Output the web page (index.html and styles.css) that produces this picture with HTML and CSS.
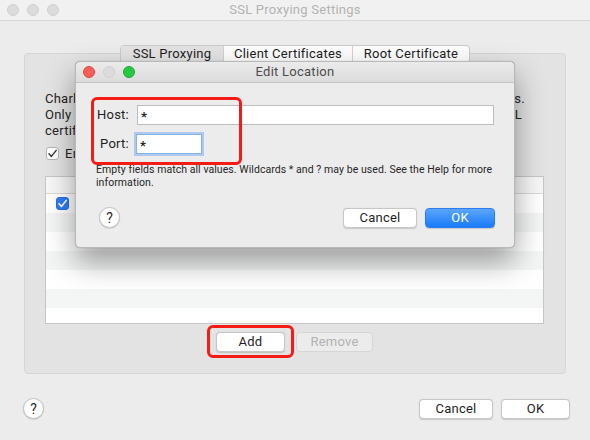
FILE: index.html
```html
<!DOCTYPE html>
<html>
<head>
<meta charset="utf-8">
<link rel="stylesheet" href="styles.css">
</head>
<body>
<div class="window">
  <div class="titlebar">
    <div class="lights">
      <span class="light off"></span><span class="light off"></span><span class="light off"></span>
    </div>
    <div class="title">SSL Proxying Settings</div>
    <div></div>
  </div>
  <div class="content">
    <div class="tabs">
      <div class="tab t1 selected">SSL Proxying</div>
      <div class="tab t2">Client Certificates</div>
      <div class="tab t3">Root Certificate</div>
    </div>
    <div class="tabbox">
      <div class="desc">
        <div class="line l1">Charles can show you the plain text contents of SSL requests and responses.</div>
        <div class="line l2">Only the locations listed below will be proxied. Charles will issue SSL</div>
        <div class="line">certificates signed by its root certificate, please see the Help.</div>
      </div>
      <div class="check-row"><span class="cb"><svg viewBox="0 0 13 13" width="13" height="13"><path d="M3 6.8 L5.4 9.4 L10.2 3.4" fill="none" stroke="#3a3a3a" stroke-width="1.5" stroke-linecap="round" stroke-linejoin="round"/></svg></span><span>Enable SSL Proxying</span></div>
      <div class="table">
        <div class="thead"></div>
        <div class="row"><span class="cb blue"><svg viewBox="0 0 13 13" width="13" height="13"><path d="M3 6.8 L5.4 9.4 L10.2 3.4" fill="none" stroke="#fff" stroke-width="1.6" stroke-linecap="round" stroke-linejoin="round"/></svg></span><span class="loc">*:*</span></div>
        <div class="row alt"></div>
        <div class="row"></div>
        <div class="row alt"></div>
        <div class="row"></div>
        <div class="row alt"></div>
        <div class="row"></div>
      </div>
      <div class="btnrow">
        <span class="hl"><button class="btn add">Add</button></span>
        <button class="btn remove" disabled>Remove</button>
      </div>
    </div>
    <div class="footer">
      <span class="help">?</span>
      <div class="actions">
        <button class="btn cancel">Cancel</button>
        <button class="btn ok-plain">OK</button>
      </div>
    </div>
  </div>

  <div class="dialog">
    <div class="dtitlebar">
      <div class="lights dl">
        <span class="light red"></span><span class="light off"></span><span class="light green"></span>
      </div>
      <div class="dtitle">Edit Location</div>
      <div></div>
    </div>
    <div class="dbody">
      <div class="form">
        <label class="lbl">Host:</label>
        <div class="field host">*</div>
        <label class="lbl">Port:</label>
        <div class="field port">*</div>
      </div>
      <div class="hint">Empty fields match all values. Wildcards * and ? may be used. See the Help for more<br>information.</div>
      <div class="dactions">
        <span class="help">?</span>
        <div class="actions">
          <button class="btn dcancel">Cancel</button>
          <button class="btn primary">OK</button>
        </div>
      </div>
    </div>
    <div class="mark"></div>
  </div>
</div>
</body>
</html>
```
FILE: styles.css
```css
* { box-sizing: border-box; }
html, body { margin: 0; padding: 0; }
body {
  width: 590px;
  height: 440px;
  overflow: hidden;
  background: #ececec;
  font-family: Roboto, "Liberation Sans", sans-serif;
  font-size: 13px;
  letter-spacing: 0.25px;
  color: #242424;
}
.window {
  position: relative;
  width: 590px;
  height: 440px;
  background: #ececec;
}
.titlebar {
  height: 21px;
  display: grid;
  grid-template-columns: 1fr auto 1fr;
  align-items: center;
  background: #f1f1f1;
  border-bottom: 1px solid #d8d8d8;
}
.lights {
  display: flex;
  gap: 8px;
  padding-left: 7px;
}
.light {
  width: 12px;
  height: 12px;
  border-radius: 50%;
  display: block;
}
.light.off { background: #dcdcdc; border: 1px solid #d0d0d0; }
.light.red { background: #fc5f57; border: 1px solid #df4741; }
.light.green { background: #2ac840; border: 1px solid #1ea930; }
.title {
  color: #b3b3b3;
  font-size: 13px;
  line-height: 20px;
}
.content {
  display: flex;
  flex-direction: column;
}
.tabs {
  margin-top: 24px;
  align-self: center;
  display: flex;
  height: 21px;
  margin-bottom: -13px;
  position: relative;
  z-index: 1;
  border: 1px solid #c9c9c9;
  border-radius: 4px;
  background: #fdfdfd;
  overflow: hidden;
}
.tab {
  text-align: center;
  line-height: 16px;
  padding-bottom: 3px;
  border-right: 1px solid #d2d2d2;
  color: #1e1e1e;
}
.tab.t1 { width: 103px; }
.tab.t2 { width: 129px; }
.tab.t3 { width: 116px; border-right: none; }
.tab.selected { background: #e3e3e3; }
.tabbox {
  margin: 0 24px;
  height: 321px;
  background: #e3e3e3;
  border: 1px solid #d6d6d6;
  border-radius: 4px;
  padding: 37px 21px 0 20px;
}
.desc .line {
  line-height: 16px;
  white-space: nowrap;
}
.desc .l1, .desc .l2 {
  white-space: normal;
  text-align: justify;
  text-align-last: justify;
}
.desc .l1 { width: 480px; }
.desc .l2 { width: 477px; }
.check-row {
  margin-top: 6px;
  height: 16px;
  display: flex;
  align-items: center;
  gap: 6px;
  padding-left: 1px;
}
.cb {
  width: 13px;
  height: 13px;
  border-radius: 3px;
  background: #fff;
  border: 1px solid #b5b5b5;
  display: flex;
  align-items: center;
  justify-content: center;
  overflow: hidden;
}
.cb svg { display: block; flex: none; }
.cb.blue { background: #2e7cf6; border-color: #2a6fdc; }
.table {
  margin-top: 15px;
  height: 148px;
  border: 1px solid #c6c6c6;
  background: #fff;
  overflow: hidden;
}
.thead {
  height: 17px;
  background: #f7f7f7;
  border-bottom: 1px solid #d9d9d9;
}
.row {
  height: 19px;
  background: #fff;
  display: flex;
  align-items: center;
  padding-left: 10px;
  gap: 10px;
}
.row.alt { background: #f4f5f5; }
.loc { font-size: 13px; }
.btnrow {
  margin-top: 8px;
  display: flex;
  justify-content: center;
  gap: 11px;
}
.btn {
  font-family: inherit;
  font-size: 13px;
  letter-spacing: 0.25px;
  height: 20px;
  padding: 0;
  border: 1px solid #c6c6c6;
  border-radius: 4px;
  background: #fff;
  color: #1f1f1f;
  box-shadow: 0 0.5px 1px rgba(0,0,0,0.15);
  line-height: 18px;
}
.hl {
  position: relative;
  display: block;
}
.hl::after {
  content: "";
  position: absolute;
  left: -9px;
  right: -9px;
  top: -7px;
  bottom: -6px;
  border: 3px solid #f41c14;
  border-radius: 6px;
}
.add { width: 69px; display: block; }
.remove {
  width: 77px;
  background: #ececec;
  color: #b2b2b2;
  border-color: #d6d6d6;
  box-shadow: none;
}
.footer {
  margin-top: 24px;
  padding: 0 20px 0 23px;
  display: flex;
  align-items: center;
  justify-content: space-between;
}
.help {
  width: 21px;
  height: 21px;
  border-radius: 50%;
  background: #fff;
  border: 1px solid #c4c4c4;
  box-shadow: 0 0.5px 1px rgba(0,0,0,0.2);
  display: flex;
  align-items: center;
  justify-content: center;
  font-size: 14px;
  color: #2a2a2a;
  letter-spacing: 0;
}
.actions {
  display: flex;
  gap: 8px;
}
.cancel { width: 74px; }
.ok-plain { width: 69px; }

/* dialog */
.dialog {
  position: absolute;
  left: 75px;
  top: 61px;
  width: 440px;
  height: 187px;
  background: #ececec;
  border: 1px solid #b9b9b9;
  border-radius: 5px;
  box-shadow: 0 14px 30px rgba(0,0,0,0.38), 0 0 1px rgba(0,0,0,0.3);
  z-index: 5;
}
.dtitlebar {
  height: 21px;
  display: grid;
  grid-template-columns: 1fr auto 1fr;
  align-items: center;
  background: linear-gradient(#ebebeb, #dcdcdc);
  border-bottom: 1px solid #c4c4c4;
  border-radius: 5px 5px 0 0;
}
.dl { padding-left: 7px; }
.dtitle {
  color: #4c4c4c;
  font-size: 13px;
  line-height: 20px;
}
.dbody {
  padding: 21px 19px 0 0;
}
.form {
  display: grid;
  grid-template-columns: 53px 357px;
  column-gap: 8px;
  row-gap: 8px;
  align-items: center;
}
.lbl { text-align: right; line-height: 20px; color: #1f1f1f; padding-top: 1px; }
.field {
  height: 20px;
  background: #fff;
  border: 1px solid #bdbdbd;
  padding-left: 3px;
  line-height: 20px;
  font-size: 13px;
  font-weight: bold;
}
.field.host { line-height: 22px; }
.field.port {
  width: 66px;
  margin-left: -1px;
  border: 1px solid #84b2ec;
  box-shadow: 0 0 0 2px rgba(125,172,236,0.55);
  line-height: 22px;
}
.hint {
  margin-top: 9px;
  padding-left: 20px;
  font-size: 10.5px;
  letter-spacing: 0.06px;
  line-height: 13px;
  white-space: nowrap;
  color: #262626;
}
.dactions {
  margin-top: 18px;
  padding-left: 23px;
  display: flex;
  align-items: center;
  justify-content: space-between;
}
.dcancel { width: 74px; }
.primary {
  width: 70px;
  color: #fff;
  border: 1px solid #2d7cf5;
  background: linear-gradient(#5aa6fd, #1b7bf8);
}
.mark {
  position: absolute;
  left: 15px;
  top: 35px;
  width: 151px;
  height: 68px;
  border: 3px solid #f41c14;
  border-radius: 6px;
}
```
